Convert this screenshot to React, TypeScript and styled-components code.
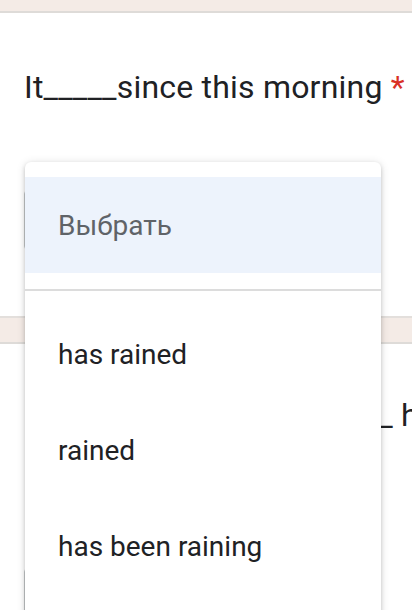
import { createGlobalStyle, styled } from 'styled-components';

const GlobalStyle = createGlobalStyle`
  html, body {
    margin: 0;
    padding: 0;
    background: #ffffff;
    overflow: hidden;
  }
  body {
    font-family: Roboto, "Noto Sans", Arial, sans-serif;
    color: #202124;
  }
`;

const options = ['has rained', 'rained', 'has been raining'];

export default function App() {
  return (
    <>
      <GlobalStyle />
      <Page>
        <Strip />
        <QuestionCard>
          <Title>
            It_____since this morning <Required>*</Required>
          </Title>
          <SelectBox />
        </QuestionCard>
        <Strip $tall />
        <QuestionCard $second>
          <Title $wide>I _______ for this bus, for _ half an hour</Title>
          <SelectBox />
        </QuestionCard>

        <Dropdown>
          <Placeholder>Выбрать</Placeholder>
          <Divider />
          {options.map((option) => (
            <Option key={option}>{option}</Option>
          ))}
        </Dropdown>
      </Page>
    </>
  );
}

const Page = styled.div`
  position: relative;
  width: 412px;
  height: 610px;
  overflow: hidden;
  background: #ffffff;
`;

const Strip = styled.div<{ $tall?: boolean }>`
  height: ${({ $tall }) => ($tall ? '24px' : '11px')};
  background: #f4ebe6;
  border-top: ${({ $tall }) => ($tall ? '2px solid #e3dfdc' : 'none')};
  border-bottom: 2px solid #dedbd8;
`;

const QuestionCard = styled.section<{ $second?: boolean }>`
  display: flex;
  flex-direction: column;
  padding: ${({ $second }) => ($second ? '46px' : '49px')} 0 0 24px;
  height: ${({ $second }) => ($second ? '300px' : '303px')};
  box-sizing: border-box;
  background: #ffffff;
`;

const Title = styled.h2<{ $wide?: boolean }>`
  margin: 0;
  width: ${({ $wide }) => ($wide ? '445px' : 'auto')};
  white-space: ${({ $wide }) => ($wide ? 'normal' : 'nowrap')};
  font-size: 32px;
  font-weight: 400;
  line-height: 50px;
  letter-spacing: 0.2px;
  color: #202124;
`;

const Required = styled.span`
  color: #d93025;
`;

const SelectBox = styled.div`
  margin-top: 78px;
  width: 300px;
  height: 58px;
  border: 1px solid #c4c7c9;
  border-radius: 4px;
`;

const Dropdown = styled.div`
  position: absolute;
  top: 162px;
  left: 25px;
  width: 356px;
  height: 480px;
  padding-top: 15px;
  box-sizing: border-box;
  background: #ffffff;
  border-radius: 6px;
  box-shadow: 0 2px 4px rgba(0, 0, 0, 0.18), 0 1px 10px rgba(0, 0, 0, 0.12);
`;

const Option = styled.div`
  display: flex;
  align-items: center;
  height: 96px;
  padding-left: 33px;
  font-size: 28px;
  color: #202124;
`;

const Placeholder = styled(Option)`
  background: #edf3fc;
  color: #5f6368;
`;

const Divider = styled.div`
  margin: 16px 0 15px;
  height: 2px;
  background: #dcdcdc;
`;
